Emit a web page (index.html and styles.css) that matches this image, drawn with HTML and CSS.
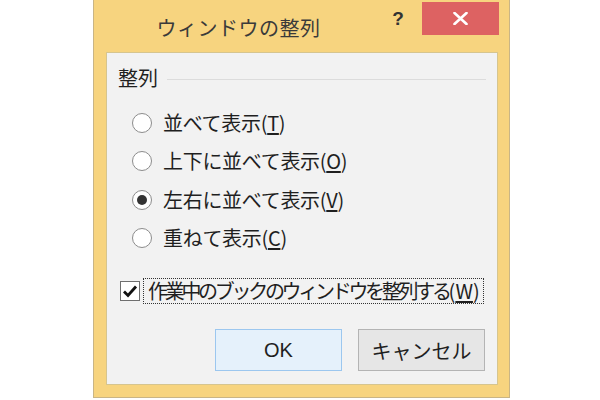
FILE: index.html
```html
<!DOCTYPE html>
<html lang="ja">
<head>
<meta charset="utf-8">
<link rel="stylesheet" href="styles.css">
</head>
<body>
<div class="dialog">
  <div class="titlebar">
    <div class="title">ウィンドウの整列</div>
    <div class="help">?</div>
    <div class="close">
      <svg width="15" height="13" viewBox="0 0 15 13"><path d="M1.5 1 L13.5 12 M13.5 1 L1.5 12" stroke="#fff" stroke-width="2.6" stroke-linecap="round"/></svg>
    </div>
  </div>
  <div class="panel">
    <div class="group-head">
      <span class="group-label">整列</span>
      <span class="group-line"></span>
    </div>
    <div class="radios">
      <div class="radio-row"><span class="radio"></span><span class="label">並べて表示(<u>T</u>)</span></div>
      <div class="radio-row"><span class="radio"></span><span class="label">上下に並べて表示(<u>O</u>)</span></div>
      <div class="radio-row"><span class="radio checked"></span><span class="label">左右に並べて表示(<u>V</u>)</span></div>
      <div class="radio-row"><span class="radio"></span><span class="label">重ねて表示(<u>C</u>)</span></div>
    </div>
    <div class="check-row">
      <span class="checkbox">
        <svg width="16" height="14" viewBox="0 0 16 14"><path d="M2 7.5 L6 11.5 L14 2.5" fill="none" stroke="#111" stroke-width="2.8" stroke-linejoin="miter"/></svg>
      </span>
      <span class="focus"><span class="tight">作業中のブックのウィンドウを整列する</span>(<u>W</u>)</span>
    </div>
    <div class="buttons">
      <div class="btn ok">OK</div>
      <div class="btn cancel">キャンセル</div>
    </div>
  </div>
</div>
</body>
</html>
```
FILE: styles.css
```css
html, body {
  margin: 0;
  padding: 0;
  background: #ffffff;
}
body {
  font-family: "Noto Sans CJK JP", "Noto Sans", sans-serif;
  color: #1f1f1f;
}
.dialog {
  margin-left: 93px;
  width: 415px;
  height: 397px;
  background: #f7d47f;
  border: 1px solid #c9b585;
  border-top: none;
  display: flex;
  flex-direction: column;
}
.titlebar {
  height: 52px;
  display: flex;
  align-items: flex-start;
}
.title {
  flex: 1;
  text-align: center;
  font-size: 20px;
  line-height: 24px;
  padding-top: 16px;
  color: #3a3a3a;
  letter-spacing: 0.5px;
}
.help {
  width: 30px;
  text-align: center;
  font-family: "Liberation Sans", sans-serif;
  font-weight: bold;
  font-size: 19px;
  line-height: 20px;
  margin-top: 9px;
  color: #333;
}
.close {
  width: 77px;
  height: 33px;
  margin-top: 2px;
  margin-left: 9px;
  margin-right: 10px;
  background: #dd6262;
  display: flex;
  align-items: center;
  justify-content: center;
}
.panel {
  margin: 0 11px 0 12px;
  height: 333px;
  background: #f2f2f2;
  border: 1px solid #d6c58f;
  box-sizing: border-box;
  display: flex;
  flex-direction: column;
  padding: 12px 11px 0 11px;
}
.group-head {
  display: flex;
  align-items: center;
  height: 26px;
}
.group-label {
  font-size: 20px;
  line-height: 26px;
}
.group-line {
  flex: 1;
  height: 1px;
  background: #dcdcdc;
  margin-left: 9px;
  margin-top: 2px;
}
.radios {
  margin-top: 13px;
  padding-left: 14px;
  display: flex;
  flex-direction: column;
}
.radio-row {
  height: 38.3px;
  display: flex;
  align-items: center;
}
.radio {
  width: 20px;
  height: 20px;
  box-sizing: border-box;
  border: 1.5px solid #8c8c8c;
  border-radius: 50%;
  background: #fff;
  display: flex;
  align-items: center;
  justify-content: center;
  margin-right: 11px;
}
.radio.checked::after {
  content: "";
  width: 10px;
  height: 10px;
  border-radius: 50%;
  background: #333;
}
.label {
  font-size: 20px;
  line-height: 26px;
  letter-spacing: -0.3px;
}
.label u, .focus u {
  text-underline-offset: 2px;
}
.check-row {
  margin-top: 21px;
  display: flex;
  align-items: center;
  height: 26px;
  padding-left: 2px;
}
.checkbox {
  width: 20px;
  height: 20px;
  box-sizing: border-box;
  border: 1px solid #6f6f6f;
  background: #fff;
  display: flex;
  align-items: center;
  justify-content: center;
  margin-right: 3px;
}
.focus {
  font-size: 20px;
  line-height: 24px;
  border: 1px dotted #333;
  padding: 0 3px 0 4px;
  white-space: nowrap;
}
.tight {
  letter-spacing: -3.3px;
}
.buttons {
  margin-top: 25px;
  display: flex;
  justify-content: flex-end;
  gap: 16px;
  padding-right: 1px;
}
.btn {
  width: 127px;
  height: 42px;
  box-sizing: border-box;
  display: flex;
  align-items: center;
  justify-content: center;
  font-size: 20px;
}
.btn.ok {
  background: #e5f1fb;
  border: 1px solid #9cc7ef;
  font-family: "Liberation Sans", sans-serif;
}
.btn.cancel {
  background: #e6e6e6;
  border: 1px solid #b4b4b4;
}
```
